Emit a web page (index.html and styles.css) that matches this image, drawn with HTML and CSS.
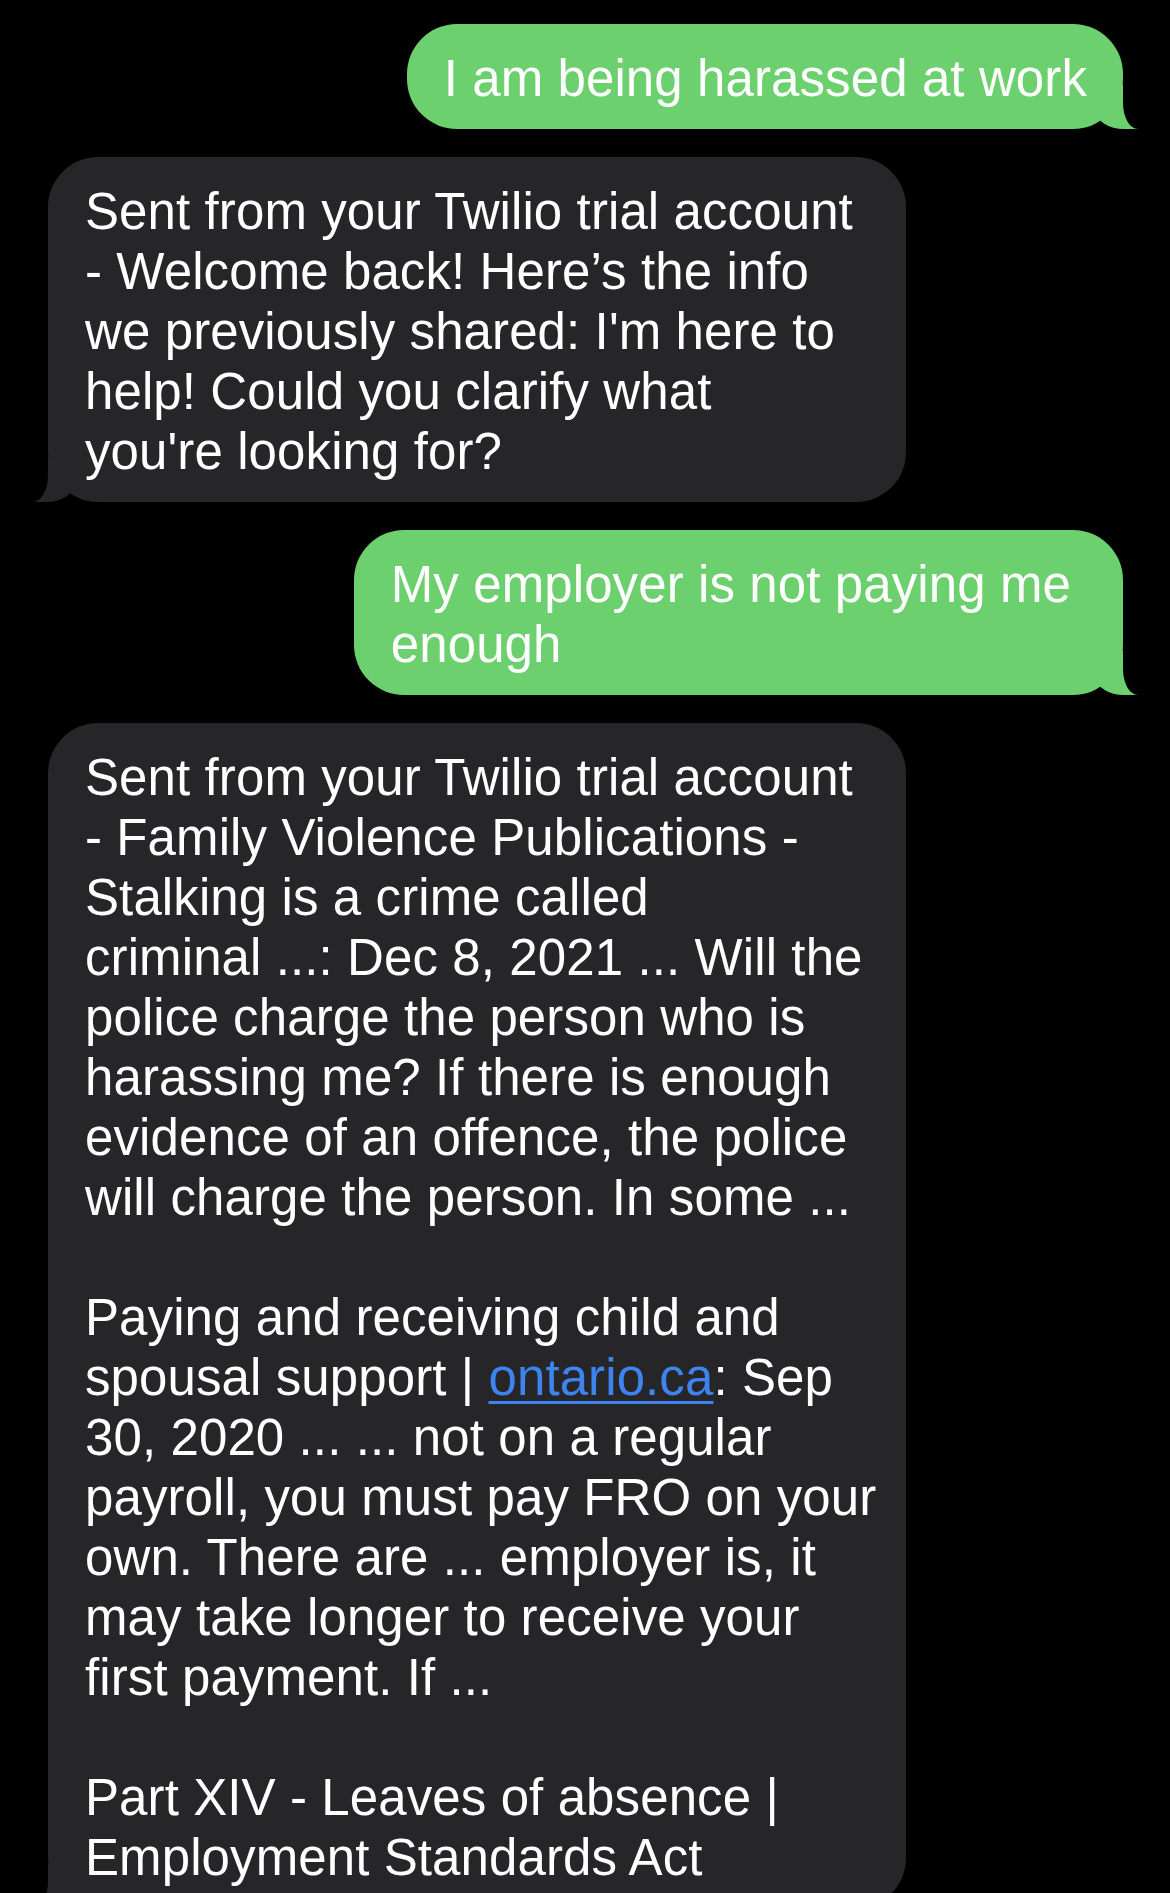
FILE: index.html
```html
<!DOCTYPE html>
<html lang="en">
<head>
<meta charset="utf-8">
<title>Messages</title>
<link rel="stylesheet" href="styles.css">
</head>
<body>
<main class="thread">
  <div class="bubble sent">I am being harassed at work</div>
  <div class="bubble received">Sent from your Twilio trial account<br>- Welcome back! Here’s the info<br>we previously shared: I'm here to<br>help! Could you clarify what<br>you're looking for?</div>
  <div class="bubble sent wrapped">My employer is not paying me<br>enough</div>
  <div class="bubble received">Sent from your Twilio trial account<br>- Family Violence Publications -<br>Stalking is a crime called<br>criminal ...: Dec 8, 2021 ... Will the<br>police charge the person who is<br>harassing me? If there is enough<br>evidence of an offence, the police<br>will charge the person. In some ...<br><br>Paying and receiving child and<br>spousal support | <a class="link" href="#">ontario.ca</a>: Sep<br>30, 2020 ... ... not on a regular<br>payroll, you must pay FRO on your<br>own. There are ... employer is, it<br>may take longer to receive your<br>first payment. If ...<br><br>Part XIV - Leaves of absence |<br>Employment Standards Act</div>
</main>
</body>
</html>
```
FILE: styles.css
```css
html, body {
  margin: 0;
  background: #000;
}

.thread {
  display: flex;
  flex-direction: column;
  gap: 28px;
  padding: 24px 47px 0 48px;
}

.bubble {
  position: relative;
  box-sizing: border-box;
  font-family: "Liberation Sans", Arial, sans-serif;
  font-size: 51px;
  line-height: 60px;
  letter-spacing: 0.1px;
  color: #fff;
  padding: 25px 36px 20px 37px;
  border-radius: 50px;
  white-space: nowrap;
}

.sent {
  align-self: flex-end;
  background: #6bd06d;
}

.sent.wrapped {
  padding-right: 52px;
}

.sent::before {
  content: "";
  position: absolute;
  right: -15px;
  bottom: 0;
  width: 42px;
  height: 44px;
  background: #6bd06d;
  border-bottom-left-radius: 28px 18px;
}

.sent::after {
  content: "";
  position: absolute;
  right: -40px;
  bottom: 0;
  width: 40px;
  height: 48px;
  background: #000;
  border-bottom-left-radius: 15px 26px;
}

.received {
  align-self: flex-start;
  width: 858px;
  background: #262628;
}

.received::before {
  content: "";
  position: absolute;
  left: -16px;
  bottom: 0;
  width: 42px;
  height: 44px;
  background: #262628;
  border-bottom-right-radius: 28px 18px;
}

.received::after {
  content: "";
  position: absolute;
  left: -40px;
  bottom: 0;
  width: 40px;
  height: 48px;
  background: #000;
  border-bottom-right-radius: 16px 26px;
}

.link {
  color: #3d84f0;
  text-decoration: underline;
  text-decoration-thickness: 3px;
  text-underline-offset: 6px;
}
```
